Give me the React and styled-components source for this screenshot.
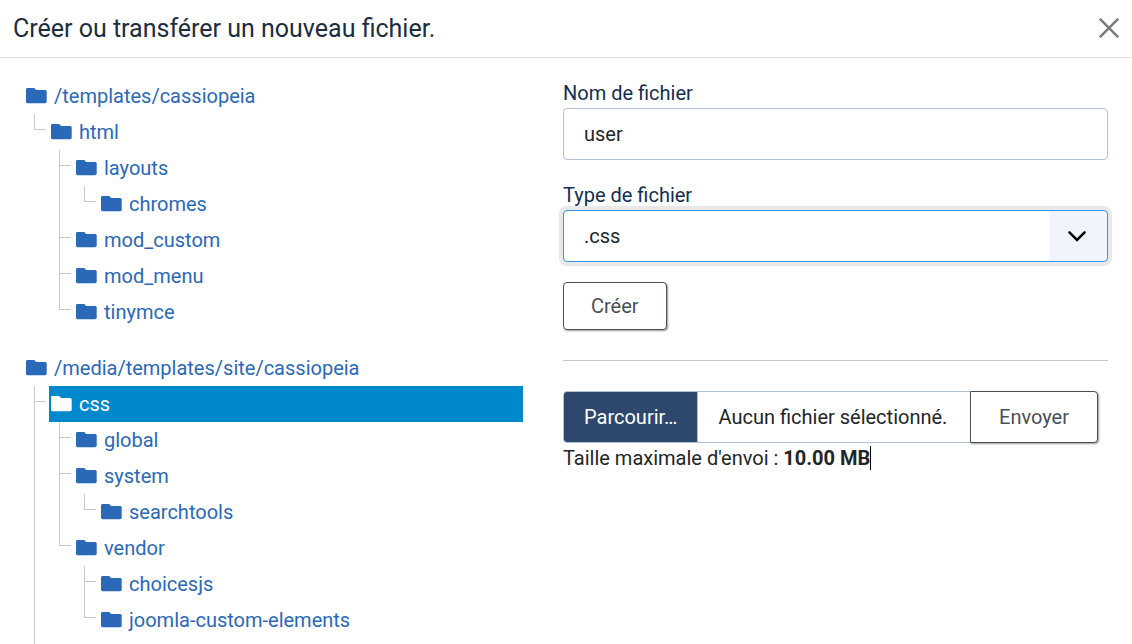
import React, { useState } from 'react';
import styled, { createGlobalStyle } from 'styled-components';

const GlobalStyle = createGlobalStyle`
  *, *::before, *::after {
    box-sizing: border-box;
  }
  body {
    margin: 0;
    background: #fff;
    color: #22262a;
    font: 400 20px/30px Roboto, 'Liberation Sans', sans-serif;
  }
`;

const Modal = styled.div`
  display: flex;
  flex-direction: column;
  height: 100vh;
  overflow: hidden;
`;

const Header = styled.header`
  display: flex;
  align-items: center;
  justify-content: space-between;
  flex: none;
  padding: 12px 13px;
  border-bottom: 1px solid #dee2e6;
`;

const Title = styled.h1`
  margin: 0;
  color: #1c2d42;
  font-size: 25px;
  font-weight: 400;
  line-height: 33px;
`;

const CloseButton = styled.button`
  display: flex;
  padding: 0 0 1px;
  border: none;
  background: transparent;
  color: #7c7c7c;
  cursor: pointer;
`;

const Body = styled.main`
  display: grid;
  grid-template-columns: calc(50% - 43px) 1fr;
  gap: 40px;
  padding: 20px 24px;
`;

const Trees = styled.nav`
  display: flex;
  flex-direction: column;
  gap: 20px;
`;

const TreeList = styled.ul`
  margin: 0 0 0 10px;
  padding: 0;
  list-style: none;
`;

const TreeItem = styled.li`
  padding-left: 15px;
  padding-bottom: ${props => (props.$continues ? '36px' : '0')};
  background-image: linear-gradient(#c8c8c8, #c8c8c8), linear-gradient(#c8c8c8, #c8c8c8);
  background-repeat: no-repeat;
  background-position: 0 0, 0 15px;
  background-size: 1px ${props => (props.$last ? '16px' : '100%')}, 12px 1px;
`;

const FolderLink = styled.a`
  display: flex;
  align-items: center;
  gap: 7px;
  height: 36px;
  padding-left: 2px;
  background: ${props => (props.$selected ? '#0088cd' : 'transparent')};
  color: ${props => (props.$selected ? '#fff' : '#2a69b8')};
  text-decoration: none;
  white-space: nowrap;
`;

const Panel = styled.div`
  display: flex;
  flex-direction: column;
`;

const Form = styled.form`
  display: flex;
  flex-direction: column;
  align-items: flex-start;
  gap: 20px;
`;

const Field = styled.div`
  display: flex;
  flex-direction: column;
  width: 100%;
`;

const Label = styled.label`
  color: #132f53;
`;

const TextInput = styled.input`
  width: 100%;
  height: 52px;
  padding: 0 20px;
  border: 1px solid #b2bfd9;
  border-radius: 4px;
  background: #fff;
  color: #22262a;
  font: inherit;
  outline: none;
`;

const SelectBox = styled.div`
  display: grid;
  grid-template-columns: 1fr 62px;
  align-items: center;
`;

const Select = styled.select`
  grid-area: 1 / 1 / 2 / 3;
  appearance: none;
  height: 52px;
  padding: 0 77px 0 20px;
  border: 1px solid #3b95ef;
  border-radius: 4px;
  background: linear-gradient(#f0f4fb, #f0f4fb) right / 57px 100% no-repeat #fff;
  box-shadow: 0 0 0 4px #e9e9e9;
  color: #22262a;
  font: inherit;
  outline: none;
`;

const Chevron = styled.svg`
  grid-area: 1 / 2;
  justify-self: center;
  pointer-events: none;
`;

const Button = styled.button`
  height: ${props => (props.$attached ? '52px' : '48px')};
  margin-left: ${props => (props.$attached ? '-1px' : '0')};
  padding: 0 ${props => (props.$attached ? '28px' : '27px')};
  border: 1px solid #495057;
  border-radius: ${props => (props.$attached ? '0 4px 4px 0' : '4px')};
  background: #fff;
  box-shadow: 1px 1px 2px rgba(0, 0, 0, 0.4);
  color: #495057;
  font: inherit;
  cursor: pointer;
`;

const Divider = styled.hr`
  width: 100%;
  margin: 30px 0;
  border: none;
  border-top: 1px solid #c6c7c8;
`;

const UploadGroup = styled.form`
  display: flex;
  padding-right: 10px;
`;

const FilePicker = styled.label`
  display: flex;
  flex: 1;
  height: 52px;
  overflow: hidden;
  border: 1px solid #b2bfd9;
  border-radius: 4px 0 0 4px;
  line-height: 50px;
  white-space: nowrap;
  cursor: pointer;
`;

const HiddenFile = styled.input`
  width: 0;
  height: 0;
  opacity: 0;
`;

const Browse = styled.span`
  padding: 0 20px;
  border-right: 1px solid #b2bfd9;
  background: #2d486c;
  color: #fff;
`;

const FileName = styled.span`
  padding-left: 20px;
`;

const SizeNote = styled.p`
  display: flex;
  align-items: center;
  margin: 0;
  white-space: pre;
`;

const Caret = styled.span`
  width: 1px;
  height: 24px;
  background: #000;
`;

const trees = [
  {
    name: '/templates/cassiopeia',
    children: [
      {
        name: 'html',
        children: [
          { name: 'layouts', children: [{ name: 'chromes' }] },
          { name: 'mod_custom' },
          { name: 'mod_menu' },
          { name: 'tinymce' },
        ],
      },
    ],
  },
  {
    name: '/media/templates/site/cassiopeia',
    children: [
      {
        name: 'css',
        continues: true,
        children: [
          { name: 'global' },
          { name: 'system', children: [{ name: 'searchtools' }] },
          {
            name: 'vendor',
            children: [{ name: 'choicesjs' }, { name: 'joomla-custom-elements' }],
          },
        ],
      },
    ],
  },
];

const FolderIcon = () => (
  <svg width="21" height="16" viewBox="0 0 21 16" fill="currentColor" aria-hidden="true">
    <path d="M1.5 0H8.2L10.2 2H19C20 2 20.7 2.6 20.7 3.6V13.5C20.7 14.5 20 15.2 19 15.2H1.5C.6 15.2 0 14.5 0 13.6V1.6C0 .6.6 0 1.5 0Z" />
  </svg>
);

const Folder = ({ node, selected, onSelect }) => (
  <>
    <FolderLink
      href="#"
      $selected={selected === node.name}
      onClick={e => {
        e.preventDefault();
        onSelect(node.name);
      }}
    >
      <FolderIcon />
      {node.name}
    </FolderLink>
    {node.children && (
      <TreeList>
        {node.children.map((child, i) => (
          <TreeItem
            key={child.name}
            $last={i === node.children.length - 1 && !child.continues}
            $continues={child.continues}
          >
            <Folder node={child} selected={selected} onSelect={onSelect} />
          </TreeItem>
        ))}
      </TreeList>
    )}
  </>
);

const App = () => {
  const [selected, setSelected] = useState('css');
  const [name, setName] = useState('user');
  const [file, setFile] = useState('Aucun fichier sélectionné.');

  return (
    <>
      <GlobalStyle />
      <Modal>
        <Header>
          <Title>Créer ou transférer un nouveau fichier.</Title>
          <CloseButton type="button" aria-label="Fermer">
            <svg width="20" height="20" viewBox="0 0 20 20" stroke="currentColor" strokeWidth="2.6">
              <path d="M.8.8 19.2 19.2M19.2.8.8 19.2" />
            </svg>
          </CloseButton>
        </Header>
        <Body>
          <Trees>
            {trees.map(tree => (
              <div key={tree.name}>
                <Folder node={tree} selected={selected} onSelect={setSelected} />
              </div>
            ))}
          </Trees>
          <Panel>
            <Form onSubmit={e => e.preventDefault()}>
              <Field>
                <Label htmlFor="file-name">Nom de fichier</Label>
                <TextInput
                  id="file-name"
                  type="text"
                  value={name}
                  onChange={e => setName(e.target.value)}
                />
              </Field>
              <Field>
                <Label htmlFor="file-type">Type de fichier</Label>
                <SelectBox>
                  <Select id="file-type">
                    <option>.css</option>
                  </Select>
                  <Chevron width="20" height="14" viewBox="0 0 20 14" fill="none" stroke="#000" strokeWidth="2.5">
                    <path d="M2.4 3.4 10 11 17.6 3.4" strokeLinecap="round" />
                  </Chevron>
                </SelectBox>
              </Field>
              <Button type="submit">Créer</Button>
            </Form>
            <Divider />
            <UploadGroup onSubmit={e => e.preventDefault()}>
              <FilePicker>
                <Browse>Parcourir…</Browse>
                <FileName>{file}</FileName>
                <HiddenFile
                  type="file"
                  onChange={e => e.target.files[0] && setFile(e.target.files[0].name)}
                />
              </FilePicker>
              <Button type="submit" $attached>
                Envoyer
              </Button>
            </UploadGroup>
            <SizeNote>
              Taille maximale d'envoi : <strong>10.00 MB</strong>
              <Caret />
            </SizeNote>
          </Panel>
        </Body>
      </Modal>
    </>
  );
};

export default App;
